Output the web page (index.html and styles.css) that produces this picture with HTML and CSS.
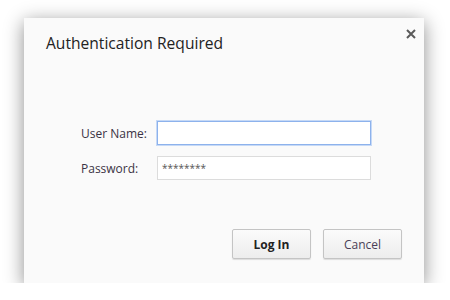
FILE: index.html
```html
<!DOCTYPE html>
<html lang="en">
<head>
  <meta charset="UTF-8" />
  <title>Authentication Required</title>
  <link rel="stylesheet" href="styles.css">
</head>
<body>
  <div class="dialog">
    <div class="dialog-header">
      <h1>Authentication Required</h1>
      <button class="close-btn" aria-label="Close">
        <svg width="10" height="10" viewBox="0 0 10 10">
          <path d="M1 1L9 9M9 1L1 9" stroke="#5a5a5a" stroke-width="2" />
        </svg>
      </button>
    </div>

    <form class="login-form">
      <label for="user">User Name:</label>
      <input id="user" type="text" class="focused" />
      <label for="pass">Password:</label>
      <input id="pass" type="text" value="********" />
    </form>

    <div class="dialog-footer">
      <button class="btn btn-primary">Log In</button>
      <button class="btn">Cancel</button>
    </div>
  </div>
</body>
</html>
```

FILE: styles.css
```css
body {
  margin: 0;
  padding: 18px 0 0 24px;
  background: #fff;
  font-family: "Open Sans", sans-serif;
  color: #333;
}

.dialog {
  width: 400px;
  height: 265px;
  box-sizing: border-box;
  display: flex;
  flex-direction: column;
  background: #fafafa;
  box-shadow: 0 4px 18px rgba(0,0,0,0.45);
}

.dialog-header {
  display: flex;
  justify-content: space-between;
  align-items: flex-start;
  padding: 13px 8px 0 22px;
}

.dialog-header h1 {
  margin: 0;
  font-size: 15.6px;
  font-weight: 400;
  line-height: 24px;
  color: #222;
}

.close-btn {
  background: none;
  border: none;
  padding: 0;
  margin-top: -2px;
  width: 10px;
  height: 10px;
  cursor: pointer;
}

.close-btn svg {
  display: block;
}

.login-form {
  display: grid;
  grid-template-columns: 76px 214px;
  row-gap: 11px;
  align-items: center;
  margin-top: 66px;
  padding-left: 57px;
  font-size: 12px;
}

.login-form label {
  color: #3a3344;
}

.login-form input {
  height: 24px;
  box-sizing: border-box;
  border: 1px solid #dcdcdc;
  background: #fff;
  padding: 0 4px;
  font-family: "Open Sans", sans-serif;
  font-size: 10px;
  color: #555;
  outline: none;
}

.login-form input.focused {
  border-color: #8db2ec;
  box-shadow: 0 0 0 1px #c6d9f6;
}

.dialog-footer {
  margin-top: auto;
  display: flex;
  justify-content: flex-end;
  gap: 12px;
  padding: 0 22px 24px 0;
}

.btn {
  width: 79px;
  height: 30px;
  font-family: "Open Sans", sans-serif;
  font-size: 12px;
  color: #4a3f58;
  background: linear-gradient(#fbfbfb, #ededed);
  border: 1px solid #c4c4c4;
  border-radius: 2px;
  box-shadow: 0 1px 1px rgba(0,0,0,0.12);
  cursor: pointer;
}

.btn-primary {
  font-weight: 700;
  color: #222;
}
```
